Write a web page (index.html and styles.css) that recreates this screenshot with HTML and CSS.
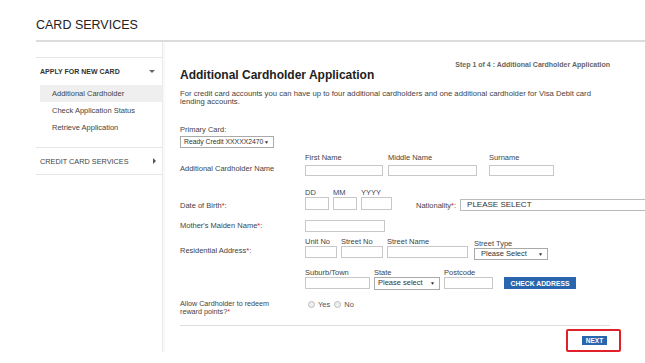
FILE: index.html
```html
<!DOCTYPE html>
<html lang="en">
<head>
    <meta charset="UTF-8">
    <meta name="viewport" content="width=device-width, initial-scale=1.0">
    <title>Card Services</title>
    <link rel="stylesheet" href="styles.css">
</head>
<body>
    <header class="top">
        <h1>CARD SERVICES</h1>
    </header>

    <div class="layout">
        <aside class="sidebar">
            <div class="nav-group open">
                <div class="nav-head bold">APPLY FOR NEW CARD <span class="caret-down"></span></div>
                <ul class="nav-items">
                    <li class="active">Additional Cardholder</li>
                    <li>Check Application Status</li>
                    <li>Retrieve Application</li>
                </ul>
            </div>
            <div class="nav-group">
                <div class="nav-head">CREDIT CARD SERVICES <span class="caret-right"></span></div>
            </div>
        </aside>

        <main class="content">
            <div class="title-row">
                <h2>Additional Cardholder Application</h2>
                <span class="step">Step 1 of 4 : Additional Cardholder Application</span>
            </div>
            <p class="intro">For credit card accounts you can have up to four additional cardholders and one additional cardholder for Visa Debit card lending accounts.</p>

            <div class="primary">
                <div class="primary-label">Primary Card:</div>
                <div class="select sel-primary">Ready Credit XXXXX2470 <span class="arrow">&#9660;</span></div>
            </div>

            <div class="row row-name">
                <div class="row-label">Additional Cardholder Name</div>
                <div class="fields">
                    <div class="field"><span class="field-label">First Name</span><input class="f-first" type="text"></div>
                    <div class="field"><span class="field-label">Middle Name</span><input class="f-middle" type="text"></div>
                    <div class="field gap-wide"><span class="field-label">Surname</span><input class="f-surname" type="text"></div>
                </div>
            </div>

            <div class="row row-dob">
                <div class="row-label">Date of Birth<span class="req">*</span>:</div>
                <div class="fields">
                    <div class="field"><span class="field-label">DD</span><input class="f-day" type="text"></div>
                    <div class="field"><span class="field-label">MM</span><input class="f-month" type="text"></div>
                    <div class="field"><span class="field-label">YYYY</span><input class="f-year" type="text"></div>
                    <div class="nationality">
                        <span class="nat-label">Nationality<span class="req">*</span>:</span>
                        <div class="select sel-nation">PLEASE SELECT</div>
                    </div>
                </div>
            </div>

            <div class="row row-maiden">
                <div class="row-label">Mother's Maiden Name<span class="req">*</span>:</div>
                <input class="f-maiden" type="text">
            </div>

            <div class="row row-address">
                <div class="row-label">Residential Address<span class="req">*</span>:</div>
                <div class="fields">
                    <div class="field"><span class="field-label">Unit No</span><input class="f-unit" type="text"></div>
                    <div class="field"><span class="field-label">Street No</span><input class="f-streetno" type="text"></div>
                    <div class="field"><span class="field-label">Street Name</span><input class="f-streetname" type="text"></div>
                    <div class="field gap-mid"><span class="field-label">Street Type</span><div class="select sel-type">Please Select <span class="arrow">&#9660;</span></div></div>
                </div>
            </div>

            <div class="row row-suburb">
                <div class="row-label"></div>
                <div class="fields">
                    <div class="field"><span class="field-label">Suburb/Town</span><input class="f-suburb" type="text"></div>
                    <div class="field"><span class="field-label">State</span><div class="select sel-state">Please select <span class="arrow">&#9660;</span></div></div>
                    <div class="field"><span class="field-label">Postcode</span><input class="f-postcode" type="text"></div>
                    <button class="btn btn-check">CHECK ADDRESS</button>
                </div>
            </div>

            <div class="row row-allow">
                <div class="row-label allow-label required">Allow Cardholder to redeem reward points?</div>
                <div class="radios">
                    <span class="radio"></span><span class="radio-text">Yes</span>
                    <span class="radio"></span><span class="radio-text">No</span>
                </div>
            </div>

            <hr class="divider">

            <div class="actions">
                <div class="highlight">
                    <button class="btn btn-next">NEXT</button>
                </div>
            </div>
        </main>
    </div>
</body>
</html>
```

FILE: styles.css
```css
body {
    font-family: "Liberation Sans", Arial, sans-serif;
    margin: 0;
    padding: 0;
    background-color: #fff;
    color: #444;
    overflow: hidden;
}

.top {
    height: 42px;
    margin-left: 36px;
    border-bottom: 2px solid #dcdcdc;
    box-sizing: border-box;
}

.top h1 {
    margin: 0;
    padding-top: 18px;
    font-size: 12.5px;
    line-height: 14px;
    font-weight: normal;
    color: #222;
}

.layout {
    display: flex;
}

/* sidebar */
.sidebar {
    width: 126px;
    min-height: 276px;
    margin-left: 36px;
    padding-top: 15px;
    border-right: 1px solid #ebebeb;
    box-shadow: 2px 0 2px rgba(0, 0, 0, 0.03);
    box-sizing: content-box;
}

.nav-group {
    border-top: 1px solid #e6e6e6;
}

.nav-group.open {
    padding-bottom: 11px;
}

.nav-group:last-child {
    border-bottom: 1px solid #e6e6e6;
}

.nav-head {
    height: 26px;
    padding-left: 4px;
    display: flex;
    align-items: center;
    font-size: 7.3px;
    color: #444;
    position: relative;
}

.nav-group.open .nav-head {
    height: 27px;
}

.bold {
    font-weight: bold;
    font-size: 7px;
    color: #333;
}

.caret-down {
    position: absolute;
    right: 7px;
    top: 12px;
    border-left: 3px solid transparent;
    border-right: 3px solid transparent;
    border-top: 3px solid #666;
}

.caret-right {
    position: absolute;
    right: 6px;
    top: 10px;
    border-top: 3px solid transparent;
    border-bottom: 3px solid transparent;
    border-left: 3px solid #555;
}

.nav-items {
    list-style: none;
    margin: 0 0 0 4px;
    padding: 0;
}

.nav-items li {
    height: 17px;
    line-height: 17px;
    padding-left: 12px;
    font-size: 7.5px;
    color: #444;
}

.nav-items li.active {
    background-color: #efefef;
}

/* main content */
.content {
    width: 430px;
    padding-left: 17px;
    padding-top: 19px;
}

.title-row {
    display: flex;
    justify-content: space-between;
    align-items: flex-start;
}

.title-row h2 {
    margin: 6px 0 0;
    font-size: 12px;
    line-height: 16px;
    color: #222;
}

.step {
    font-size: 7px;
    line-height: 8px;
    font-weight: bold;
    color: #666;
    white-space: nowrap;
}

.intro {
    margin: 7px 0 0;
    font-size: 7.7px;
    line-height: 8px;
    color: #444;
}

.primary {
    margin-top: 20px;
}

.primary-label {
    font-size: 7.5px;
    line-height: 8px;
}

.select {
    height: 12px;
    border: 1px solid #aaa;
    box-sizing: border-box;
    background: #fff;
    font-size: 7.5px;
    line-height: 10px;
    padding-left: 3px;
    color: #333;
    display: flex;
    justify-content: space-between;
    white-space: nowrap;
}

.select .arrow {
    font-size: 5px;
    padding-right: 4px;
}

.sel-primary {
    width: 94px;
    margin-top: 2px;
    font-size: 6.8px;
}

.row {
    display: flex;
    align-items: flex-end;
}

.row-label {
    width: 125px;
    flex-shrink: 0;
    font-size: 7.5px;
    line-height: 8px;
    color: #444;
}

.req,
.required::after {
    color: #d22;
}

.required::after {
    content: "*";
}

.fields {
    display: flex;
    align-items: flex-end;
    gap: 5px;
}

.field {
    display: flex;
    flex-direction: column;
}

.field-label {
    font-size: 7.5px;
    line-height: 8px;
    color: #444;
    white-space: nowrap;
}

input {
    height: 12px;
    border: 1px solid #c8c8c8;
    box-sizing: border-box;
    padding: 0;
    margin: 0;
    background: #fff;
}

.row-name {
    margin-top: 6px;
}

.row-name .row-label {
    margin-bottom: 3px;
}

.row-name .field-label {
    margin-bottom: 3px;
}

.row-name input {
    height: 11px;
}

.gap-wide {
    margin-left: 7px;
}

.f-first { width: 78px; }
.f-middle { width: 89px; }
.f-surname { width: 65px; }

.row-dob {
    margin-top: 13px;
}

.row-dob input {
    height: 13px;
}

.row-dob .fields {
    gap: 4px;
}

.f-day { width: 24px; }
.f-month { width: 24px; }
.f-year { width: 31px; }

.nationality {
    display: flex;
    align-items: center;
    margin-left: 20px;
    margin-bottom: -1px;
}

.nat-label {
    font-size: 7.5px;
    margin-right: 4px;
}

.sel-nation {
    width: 190px;
    font-size: 8px;
    padding-left: 6px;
    border-color: #bbb;
}

.row-maiden {
    margin-top: 10px;
}

.row-maiden .row-label {
    margin-bottom: 2px;
}

.f-maiden { width: 80px; }

.row-address {
    margin-top: 6px;
}

.row-address .row-label {
    margin-bottom: 3px;
}

.row-address .fields {
    gap: 4px;
}

.f-unit { width: 32px; }
.f-streetno { width: 42px; }
.f-streetname { width: 81px; }

.gap-mid {
    margin-left: 2px;
    margin-bottom: -2px;
}

.sel-type {
    width: 74px;
    padding-left: 6px;
}

.row-suburb {
    margin-top: 11px;
}

.row-suburb .fields {
    gap: 4px;
}

.f-suburb { width: 65px; }
.f-postcode { width: 49px; }

.sel-state {
    width: 66px;
    height: 13px;
    margin-bottom: -1px;
}

.btn {
    border: none;
    background-color: #2a66ad;
    color: #fff;
    font-family: "Liberation Sans", Arial, sans-serif;
    font-weight: bold;
    padding: 0;
    cursor: pointer;
}

.btn-check {
    width: 72px;
    height: 12px;
    font-size: 6.8px;
    margin-left: 7px;
    margin-bottom: 0;
}

.row-allow {
    margin-top: 11px;
    align-items: flex-start;
}

.allow-label {
    width: 100px;
    margin-right: 25px;
    font-size: 7.2px;
    line-height: 8.4px;
}

.radios {
    display: flex;
    align-items: center;
    height: 8px;
    margin-left: 3px;
    font-size: 7.5px;
}

.radio {
    width: 5px;
    height: 5px;
    border: 1px solid #bbb;
    border-radius: 50%;
    background: #eee;
    margin-right: 3px;
}

.radio-text {
    margin-right: 4px;
    color: #555;
}

.divider {
    margin: 8px 0 0;
    border: none;
    border-top: 1px solid #ddd;
    height: 0;
}

.actions {
    display: flex;
    justify-content: flex-end;
    margin-right: -11px;
    margin-top: 3px;
}

.highlight {
    border: 2px solid #e0202a;
    border-radius: 2px;
    padding: 5px 12px 5px 14px;
}

.btn-next {
    width: 25px;
    height: 9px;
    font-size: 6.5px;
    line-height: 9px;
    display: block;
}
```
